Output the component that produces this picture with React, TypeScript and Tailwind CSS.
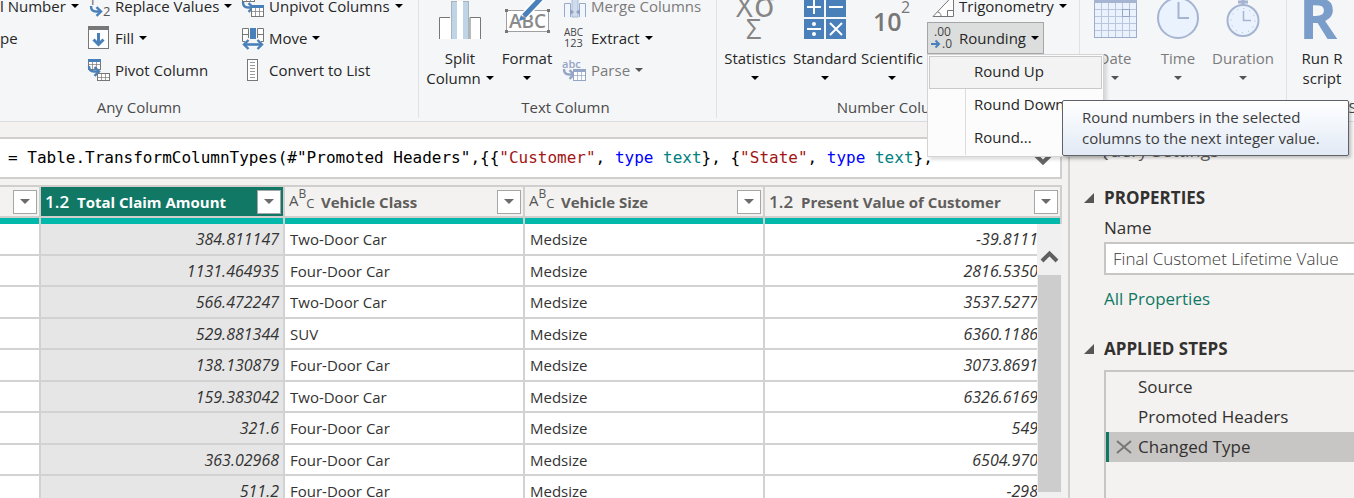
import React from "react";

type Children = { children?: React.ReactNode };

const BLUE = "#4a80b9";
const GREY = "#777777";

function Caret({ muted = false }: { muted?: boolean }) {
  return (
    <svg width="8" height="4" viewBox="0 0 8 4" className="shrink-0" aria-hidden="true">
      <path d="M0 0H8L4 4Z" fill={muted ? "#555555" : "#000000"} />
    </svg>
  );
}

function Icon({ children }: Children) {
  return (
    <svg
      width="22"
      height="24"
      viewBox="0 0 22 24"
      fill="none"
      className="shrink-0 overflow-visible"
      fontFamily="Open Sans, sans-serif"
      aria-hidden="true"
    >
      {children}
    </svg>
  );
}

function BigIcon({ children }: Children) {
  return (
    <svg
      width="46"
      height="48"
      viewBox="0 0 46 48"
      fill="none"
      className="mb-[9px] shrink-0 overflow-visible"
      fontFamily="Open Sans, sans-serif"
      aria-hidden="true"
    >
      {children}
    </svg>
  );
}

function Group({ label, className, labelClass = "", children }: Children & { label?: string; className: string; labelClass?: string }) {
  return (
    <section className={`flex shrink-0 flex-col ${className}`}>
      <div className="flex h-24">{children}</div>
      <div className={`h-[31px] pt-[10px] text-center text-[15px] leading-5 whitespace-nowrap text-[#4a4a4a] ${labelClass}`}>{label}</div>
    </section>
  );
}

function RowButton({ icon, label, caret = false, muted = false }: { icon?: React.ReactNode; label: string; caret?: boolean; muted?: boolean }) {
  return (
    <button
      disabled={muted}
      className={`flex h-8 items-center gap-[5px] pb-[2px] whitespace-nowrap ${muted ? "text-[#7b7b7b]" : "text-[#262626]"}`}
    >
      {icon}
      <span>{label}</span>
      {caret && <Caret muted={muted} />}
    </button>
  );
}

function BigButton({ icon, lines, className, muted = false, caret = true }: { icon: React.ReactNode; lines: string[]; className: string; muted?: boolean; caret?: boolean }) {
  const two = lines.length > 1;
  return (
    <button
      disabled={muted}
      className={`flex shrink-0 flex-col items-center leading-5 whitespace-nowrap ${muted ? "text-[#7b7b7b]" : "text-[#262626]"} ${className}`}
    >
      {icon}
      <span>{lines[0]}</span>
      <span className="flex h-5 items-center gap-[5px]">
        {two && <span>{lines[1]}</span>}
        {caret && <Caret muted={muted} />}
      </span>
    </button>
  );
}

function BentArrow({ x, y, color = BLUE }: { x: number; y: number; color?: string }) {
  return (
    <g transform={`translate(${x} ${y})`} stroke={color} strokeWidth="2.4">
      <path d="M1 0C1 4 3 5.5 6 5.5H10" />
      <path d="M6.5 1.2L11 5.5L6.5 9.8" />
    </g>
  );
}

function MiniTable({ x, y, h, head, stroke = GREY }: { x: number; y: number; h: number; head?: string; stroke?: string }) {
  return (
    <g transform={`translate(${x} ${y})`}>
      <rect x="0.5" y="0.5" width="12" height={h} fill="#ffffff" stroke={stroke} />
      <path d={`M4.5 0V${h}M8.5 0V${h}M0 ${Math.round(h / 2) + 0.5}H13`} stroke={stroke} strokeOpacity="0.7" />
      {head && <rect width="13" height="3" fill={head} />}
    </g>
  );
}

const ReplaceIcon = (
  <Icon>
    <text x="1" y="11" fontSize="12" fill="#555555">1</text>
    <BentArrow x={2} y={12} />
    <text x="15" y="22" fontSize="13" fill="#555555">2</text>
  </Icon>
);

const FillIcon = (
  <Icon>
    <rect x="0.5" y="0.5" width="20" height="22" fill="#ffffff" stroke={GREY} />
    <rect width="21" height="4" fill={GREY} />
    <path d="M10.5 7V18" stroke={BLUE} strokeWidth="3" />
    <path d="M5.5 13.5L10.5 18.5L15.5 13.5" stroke={BLUE} strokeWidth="3" />
  </Icon>
);

const PivotIcon = (
  <Icon>
    <MiniTable x={0} y={1} h={10} head={BLUE} />
    <BentArrow x={0} y={8} />
    <MiniTable x={9} y={15} h={7} />
  </Icon>
);

const UnpivotIcon = (
  <Icon>
    <MiniTable x={0} y={0} h={7} />
    <BentArrow x={0} y={8} />
    <MiniTable x={9} y={11} h={11} head={BLUE} />
  </Icon>
);

const MoveIcon = (
  <Icon>
    <path d="M6.500 2.500H0.500V15.500H3M0.500 8.500H6.500M6.500 2.500V12M15.500 2.500H21.500V15.500H19M21.500 8.500H15.500M15.500 2.500V12" stroke={GREY} fill="#ffffff" />
    <rect x="8" y="2" width="6" height="11" fill={BLUE} />
    <path d="M2 18.5H20" stroke={BLUE} strokeWidth="2.6" />
    <path d="M6.5 14L2 18.5L6.5 23M15.5 14L20 18.5L15.5 23" stroke={BLUE} strokeWidth="2.4" />
  </Icon>
);

const ListIcon = (
  <Icon>
    <rect x="5.5" y="1.5" width="10" height="21" fill="#ffffff" stroke={GREY} />
    <path d="M8 4.5H13M8 7.5H13M8 10.5H13M8 13.5H13M8 16.5H13M8 19.5H13" stroke="#999999" />
  </Icon>
);

const MergeIcon = (
  <Icon>
    <path d="M0.5 23V9.5H6.5V23M21.5 23V9.5H15.5V23" stroke="#9aa9c8" fill="#f1f5fc" />
    <rect x="8" y="3" width="6" height="20" fill="#cfdced" stroke="#a9b9d6" />
    <path d="M6 15L10 18L6 21ZM16 15L12 18L16 21Z" fill="#8fa0bf" />
  </Icon>
);

const ExtractIcon = (
  <Icon>
    <text x="0" y="10" fontSize="10" fill="#444444">ABC</text>
    <text x="0" y="21" fontSize="11" fill="#444444">123</text>
  </Icon>
);

const ParseIcon = (
  <Icon>
    <text x="-2" y="10" fontSize="11" fontWeight="600" fill="#94a5c5">abc</text>
    <BentArrow x={-1} y={11} color="#94a5c5" />
    <MiniTable x={9} y={11} h={11} head="#94a5c5" stroke="#94a5c5" />
  </Icon>
);

const TrigIcon = (
  <Icon>
    <path d="M1 22.5L21.5 1V22.5Z" fill="#ffffff" stroke={GREY} />
    <path d="M15.5 22V16.5H21M5.5 18C8 18.5 9 20 9 22" stroke={GREY} />
  </Icon>
);

const RoundingIcon = (
  <Icon>
    <text x="2" y="10" fontSize="12" fill="#444444">.00</text>
    <text x="10" y="22" fontSize="12" fill="#444444">.0</text>
    <path d="M-1 18H7M3.5 14.5L7 18L3.5 21.5" stroke={BLUE} strokeWidth="2" />
  </Icon>
);

const SplitIcon = (
  <BigIcon>
    <path d="M2.5 48V26.5H13M43.5 48V26.5H33V48" fill="#ffffff" stroke={GREY} />
    <rect x="3" y="27" width="11" height="21" fill="#ffffff" />
    <rect x="14" y="10" width="6" height="38" fill="#bfd4e7" />
    <rect x="26" y="10" width="6" height="38" fill="#bfd4e7" />
    <rect x="20" y="10" width="6" height="38" fill="#ffffff" />
    <path d="M14 10.5H20M26 10.5H32M14.5 10V48M31.5 10V48" stroke="#a9b4bd" />
  </BigIcon>
);

const FormatIcon = (
  <BigIcon>
    <rect x="2.5" y="19.5" width="42" height="21" fill="#ffffff" stroke="#a0a0a0" />
    <text x="5" y="37" fontSize="19" fontWeight="600" fill="#8a8a8a">ABC</text>
    <path d="M1 18h3v3H1zM43 18h3v3h-3zM1 39h3v3H1zM43 39h3v3h-3z" fill={GREY} />
    <path d="M20 25L39 5" stroke="#ffffff" strokeWidth="8" />
    <path d="M20 25L39 5" stroke={BLUE} strokeWidth="5" />
    <path d="M15 30L17 24L21 28Z" fill={BLUE} />
  </BigIcon>
);

const StatisticsIcon = (
  <BigIcon>
    <text x="4" y="26" fontSize="29" fill="#858585">X</text>
    <text x="22" y="26" fontSize="34" fill="#858585">σ</text>
    <text x="14" y="48" fontSize="27" fill="#858585">Σ</text>
  </BigIcon>
);

const StandardIcon = (
  <BigIcon>
    <path d="M2 7h20v19H2zM24 7h20v19H24zM2 28h20v20H2zM24 28h20v20H24z" fill={BLUE} />
    <path d="M5 16H19M12 9V23M27 16H41M5 38H19M28 32L40 44M40 32L28 44" stroke="#ffffff" strokeWidth="2" />
    <circle cx="12" cy="33" r="2" fill="#ffffff" />
    <circle cx="12" cy="43" r="2" fill="#ffffff" />
  </BigIcon>
);

const ScientificIcon = (
  <BigIcon>
    <text x="4" y="40" fontSize="25" fontWeight="600" fill={GREY}>10</text>
    <text x="32" y="22" fontSize="16" fill={GREY}>2</text>
  </BigIcon>
);

const DateIcon = (
  <BigIcon>
    <rect x="2.5" y="5.5" width="42" height="41" fill="#eaf2fd" stroke="#9dadc9" />
    <path d="M2 6H45V12H2Z" fill="#a5b4d0" />
    <path d="M9.5 12V46M16.5 12V46M23.5 12V46M30.5 12V46M37.5 12V46M3 18.5H44M3 25.5H44M3 32.5H44M3 39.5H44" stroke="#b9c6de" />
    <rect x="30.5" y="18.5" width="7" height="7" stroke="#94a5c5" />
  </BigIcon>
);

const TimeIcon = (
  <BigIcon>
    <circle cx="23" cy="27" r="20" fill="#eaf2fd" stroke="#a5b4d0" strokeWidth="2" />
    <path d="M23.5 11V27H34" stroke="#a5b4d0" strokeWidth="2" />
  </BigIcon>
);

const DurationIcon = (
  <BigIcon>
    <path d="M23 8V14M18 11H28" stroke="#a5b4d0" strokeWidth="3" />
    <circle cx="23" cy="29.5" r="15.5" fill="#eaf2fd" stroke="#a5b4d0" strokeWidth="2" />
    <circle cx="23" cy="29.5" r="12" stroke="#a5b4d0" strokeWidth="1" strokeDasharray="1 5.28" />
    <path d="M23.5 20V29.5H31" stroke="#a5b4d0" strokeWidth="1.5" />
  </BigIcon>
);

const RIcon = (
  <BigIcon>
    <text x="0" y="48" fontSize="58" fontWeight="700" fill="#7b9dc9">R</text>
  </BigIcon>
);

function RoundingMenu() {
  return (
    <div
      role="menu"
      className="absolute top-full left-0 z-20 w-[177px] border border-[#d4d4d4] bg-[#fcfcfc] p-px text-[15px] text-[#262626] shadow-[3px_3px_3px_rgba(0,0,0,0.12)]"
    >
      <button role="menuitem" className="block h-[33px] w-full border border-[#c9c9c9] bg-[#f3f3f3] pb-[2px] pl-11 text-left">
        Round Up
      </button>
      <div className="ml-9 border-l border-[#dcdcdc]">
        <button role="menuitem" className="block h-[33px] w-full pb-[2px] pl-2 text-left">Round Down</button>
        <button role="menuitem" className="block h-[33px] w-full pb-[2px] pl-2 text-left">Round...</button>
      </div>
      <div
        role="tooltip"
        className="absolute top-[45px] left-[134px] rounded-[2px] border border-[#5f6266] bg-linear-to-b from-white to-[#e2eaf6] py-[6px] pr-7 pl-[19px] leading-[21px] whitespace-nowrap text-[#3c3c3c] shadow-[2px_2px_3px_rgba(0,0,0,0.2)]"
      >
        Round numbers in the selected
        <br />
        columns to the next integer value.
      </div>
    </div>
  );
}

function Ribbon() {
  return (
    <header className="relative z-10 -mt-[9px] flex border-b border-[#d8dcdf] bg-[#f5f6f8] pb-[3px] text-[15px]">
      <Group label="Any Column" className="w-[419px] border-r border-[#dfe1e3]" labelClass="w-[278px]">
        <div className="w-[88px] shrink-0">
          <RowButton label="l Number" caret />
          <RowButton label="pe" />
        </div>
        <div className="w-[154px] shrink-0">
          <RowButton icon={ReplaceIcon} label="Replace Values" caret />
          <RowButton icon={FillIcon} label="Fill" caret />
          <RowButton icon={PivotIcon} label="Pivot Column" />
        </div>
        <div>
          <RowButton icon={UnpivotIcon} label="Unpivot Columns" caret />
          <RowButton icon={MoveIcon} label="Move" caret />
          <RowButton icon={ListIcon} label="Convert to List" />
        </div>
      </Group>
      <Group label="Text Column" className="w-[298px] border-r border-[#dfe1e3] pl-[6px]" labelClass="pr-[10px]">
        <BigButton icon={SplitIcon} lines={["Split", "Column"]} className="w-[70px]" />
        <BigButton icon={FormatIcon} lines={["Format"]} className="w-16" />
        <div className="pl-[5px]">
          <RowButton icon={MergeIcon} label="Merge Columns" muted />
          <RowButton icon={ExtractIcon} label="Extract" caret />
          <RowButton icon={ParseIcon} label="Parse" caret muted />
        </div>
      </Group>
      <Group label="Number Column" className="w-[363px] border-r border-[#dfe1e3]" labelClass="pr-[6px]">
        <BigButton icon={StatisticsIcon} lines={["Statistics"]} className="w-[76px]" />
        <BigButton icon={StandardIcon} lines={["Standard"]} className="w-16" />
        <BigButton icon={ScientificIcon} lines={["Scientific"]} className="w-[70px]" />
        <div>
          <div className="h-[31px] pl-[5px]">
            <RowButton icon={TrigIcon} label="Trigonometry" caret />
          </div>
          <div className="relative">
            <button
              aria-haspopup="menu"
              aria-expanded="true"
              className="flex h-8 w-[117px] items-center gap-[5px] border border-[#a5a5a5] bg-[#dcdedd] pl-1 text-[#262626]"
            >
              {RoundingIcon}
              <span>Rounding</span>
              <Caret />
            </button>
            <RoundingMenu />
          </div>
        </div>
      </Group>
      <Group className="w-[207px] border-r border-[#dfe1e3] pl-[3px]">
        <BigButton icon={DateIcon} lines={["Date"]} className="w-16" muted />
        <BigButton icon={TimeIcon} lines={["Time"]} className="w-[62px]" muted />
        <BigButton icon={DurationIcon} lines={["Duration"]} className="w-[68px]" muted />
      </Group>
      <Group label="Scripts" className="w-[170px]">
        <BigButton icon={RIcon} lines={["Run R", "script"]} className="w-[70px]" caret={false} />
      </Group>
    </header>
  );
}

function FormulaBar() {
  return (
    <div className="mb-[6px] flex h-[42px] items-center justify-between overflow-hidden border-y-2 border-r-2 border-[#d0cfcd] bg-white pl-2">
      <code className="font-['DejaVu_Sans_Mono',monospace] text-[16px] whitespace-pre text-black">
        {'= Table.TransformColumnTypes(#"Promoted Headers",{{'}
        <span className="text-[#a31515]">"Customer"</span>, <span className="text-[#0000ff]">type</span>{" "}
        <span className="text-[#008080]">text</span>
        {"}, {"}
        <span className="text-[#a31515]">"State"</span>, <span className="text-[#0000ff]">type</span>{" "}
        <span className="text-[#008080]">text</span>
        {"},"}
      </code>
      <button aria-label="Expand formula bar" className="mr-2 shrink-0 pt-1">
        <svg width="18" height="14" viewBox="0 0 18 14" fill="none">
          <path d="M2 2.500L9 9.500L16 2.500" stroke="#666666" strokeWidth="4" />
        </svg>
      </button>
    </div>
  );
}

function TypeIcon({ kind }: { kind: "num" | "text" }) {
  if (kind === "num") return <span className="w-8 shrink-0 text-[17px] font-semibold">1.2</span>;
  return (
    <span className="flex w-8 shrink-0 font-normal text-[#555555]">
      <span className="text-[15px]">A</span>
      <span className="-mt-1 text-[12px]">B</span>
      <span className="mt-[5px] text-[13px]">C</span>
    </span>
  );
}

const columns: { title: string; kind: "num" | "text" }[] = [
  { title: "Total Claim Amount", kind: "num" },
  { title: "Vehicle Class", kind: "text" },
  { title: "Vehicle Size", kind: "text" },
  { title: "Present Value of Customer", kind: "num" },
];

const rows = [
  ["384.811147", "Two-Door Car", "Medsize", "-39.8111"],
  ["1131.464935", "Four-Door Car", "Medsize", "2816.5350"],
  ["566.472247", "Two-Door Car", "Medsize", "3537.5277"],
  ["529.881344", "SUV", "Medsize", "6360.1186"],
  ["138.130879", "Four-Door Car", "Medsize", "3073.8691"],
  ["159.383042", "Two-Door Car", "Medsize", "6326.6169"],
  ["321.6", "Four-Door Car", "Medsize", "549"],
  ["363.02968", "Four-Door Car", "Medsize", "6504.970"],
  ["511.2", "Four-Door Car", "Medsize", "-298"],
];

function FilterButton({ name }: { name: string }) {
  return (
    <button aria-label={`Filter ${name}`} className="mr-[2px] ml-auto flex size-6 shrink-0 items-center justify-center border border-[#a6a6a6] bg-white">
      <svg width="10" height="5" viewBox="0 0 10 5" aria-hidden="true">
        <path d="M0 0H10L5 5Z" fill="#6b6b6b" />
      </svg>
    </button>
  );
}

function DataGrid() {
  return (
    <div className="relative">
      <table className="w-full table-fixed border-separate border-spacing-0 text-[15px] text-[#333333]">
        <colgroup>
          <col className="w-[41px]" />
          <col className="w-[244px]" />
          <col className="w-[240px]" />
          <col className="w-[240px]" />
          <col />
        </colgroup>
        <thead>
          <tr>
            <th className="border-t-2 border-r-2 border-[#d0cfcd] p-0">
              <div className="flex h-[31px] items-center border-b-2 border-[#d0cfcd] bg-[#f3f2f1]">
                <FilterButton name="previous column" />
              </div>
              <div className="h-[6px] bg-[#01b8aa]" />
            </th>
            {columns.map((c, i) => (
              <th key={c.title} scope="col" className="border-t-2 border-r-2 border-[#d0cfcd] p-0 text-left">
                <div
                  className={`flex h-[31px] items-center border-b-2 border-[#d0cfcd] pl-1 whitespace-nowrap ${
                    i === 0 ? "bg-[#117865] text-white" : "bg-[#f3f2f1] text-[#605e5c]"
                  }`}
                >
                  <TypeIcon kind={c.kind} />
                  <span className="pt-px font-bold">{c.title}</span>
                  <FilterButton name={c.title} />
                </div>
                <div className="h-[6px] bg-[#01b8aa]" />
              </th>
            ))}
          </tr>
        </thead>
        <tbody>
          {rows.map((r) => (
            <tr key={r[0]} className="h-8 bg-white even:h-[31px]">
              <td className="border-r-2 border-b-2 border-[#d2d2d2] p-0" />
              <td className="border-r-2 border-b-2 border-[#d2d2d2] bg-[#e6e6e6] p-0 pr-1 text-right text-[16px] leading-6 italic">{r[0]}</td>
              <td className="border-r-2 border-b-2 border-[#d2d2d2] p-0 pl-[5px] leading-6">{r[1]}</td>
              <td className="border-r-2 border-b-2 border-[#d2d2d2] p-0 pl-[5px] leading-6">{r[2]}</td>
              <td className="border-b-2 border-[#d2d2d2] p-0 pr-6 text-right text-[16px] leading-6 italic">{r[3]}</td>
            </tr>
          ))}
        </tbody>
      </table>
      <div className="absolute top-[39px] right-0 bottom-0 w-[25px] bg-[#f0f0f0] pt-[26px] pl-px">
        <svg width="24" height="14" viewBox="0 0 24 14" fill="none" aria-hidden="true">
          <path d="M4 11L11.500 3.500L19 11" stroke="#606060" strokeWidth="4" />
        </svg>
        <div className="mt-[11px] h-[217px] w-[23px] bg-[#cdcdcd]" />
      </div>
    </div>
  );
}

function PaneHeading({ children }: Children) {
  return (
    <h3 className="flex h-[26px] items-center gap-[10px] text-[17px] font-bold text-[#323130]">
      <svg width="10" height="10" viewBox="0 0 10 10" aria-hidden="true">
        <path d="M10 0V10H0Z" fill="#555555" />
      </svg>
      {children}
    </h3>
  );
}

function QuerySettings() {
  return (
    <aside className="flex w-[286px] shrink-0 flex-col border-l-2 border-[#d0cfcd] pl-[14px] text-[17px] text-[#323130]">
      <h2 className="flex h-[26px] items-center pl-3 text-[18px] text-[#605e5c]">Query Settings</h2>
      <div className="mt-[22px]">
        <PaneHeading>PROPERTIES</PaneHeading>
      </div>
      <div className="flex flex-col items-start pl-5">
        <label htmlFor="query-name" className="mt-1 h-[26px] leading-[26px]">Name</label>
        <input
          id="query-name"
          defaultValue="Final Customet Lifetime Value"
          className="mt-px h-[33px] w-full border-2 border-r-0 border-[#c8c6c4] bg-white pl-[7px] font-light text-[#3b3a39]"
        />
        <a href="#properties" className="mt-[11px] h-[26px] leading-[26px] text-[#117865]">All Properties</a>
      </div>
      <div className="mt-6">
        <PaneHeading>APPLIED STEPS</PaneHeading>
      </div>
      <ul className="mt-2 ml-5 grow border-t-2 border-l-2 border-[#c8c6c4] leading-[30px]">
        <li className="pl-8">Source</li>
        <li className="pl-8">Promoted Headers</li>
        <li className="flex items-center border-l-[3px] border-[#117865] bg-[#c8c6c4]">
          <button aria-label="Delete step" className="flex w-[29px] justify-center">
            <svg width="16" height="14" viewBox="0 0 16 14" fill="none">
              <path d="M1 1L15 13M15 1L1 13" stroke="#777777" strokeWidth="2" />
            </svg>
          </button>
          Changed Type
        </li>
      </ul>
    </aside>
  );
}

export default function App() {
  return (
    <div className="flex h-screen flex-col overflow-hidden bg-[#f3f2f1] font-['Open_Sans',sans-serif]">
      <Ribbon />
      <main className="flex min-h-0 flex-1 pt-[15px]">
        <div className="min-w-0 flex-1 overflow-hidden pr-[6px]">
          <FormulaBar />
          <DataGrid />
        </div>
        <QuerySettings />
      </main>
    </div>
  );
}
